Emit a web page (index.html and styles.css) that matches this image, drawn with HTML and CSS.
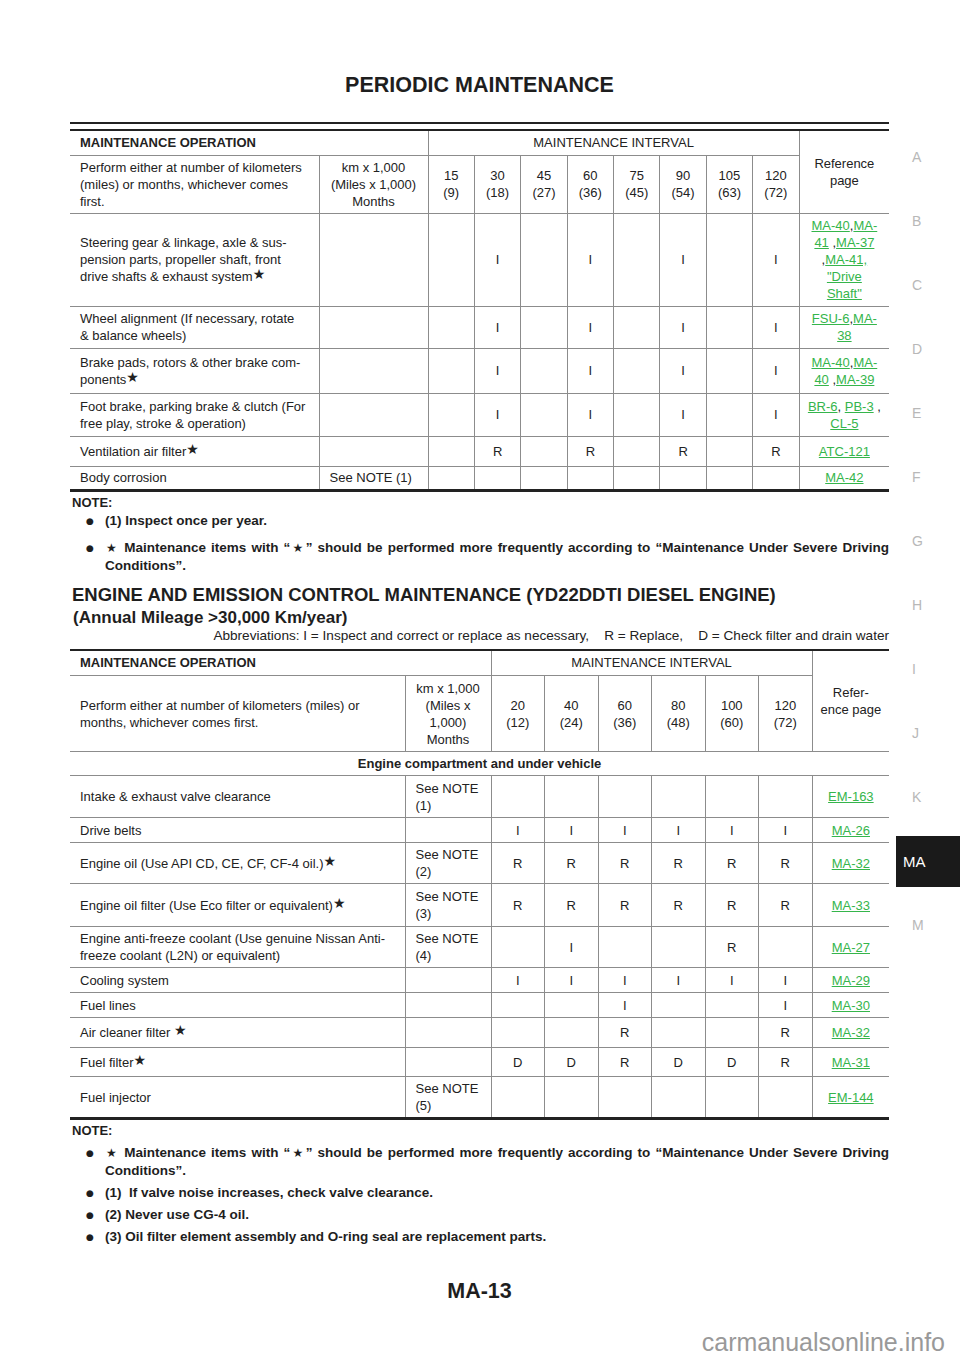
FILE: index.html
```html
<!DOCTYPE html>
<html>
<head>
<meta charset="utf-8">
<title>MA-13 Periodic Maintenance</title>
<link rel="stylesheet" href="styles.css">
</head>
<body>
<div class="page">
  <main class="main">
    <h1 class="title">PERIODIC MAINTENANCE</h1>

    <div class="t1wrap">
      <table class="grid t1">
        <colgroup>
          <col class="op1"><col class="km1">
          <col class="iv1"><col class="iv1"><col class="iv1"><col class="iv1">
          <col class="iv1"><col class="iv1"><col class="iv1"><col class="iv1">
          <col class="ref1">
        </colgroup>
        <tr class="h25">
          <td colspan="2" class="b">MAINTENANCE OPERATION</td>
          <td colspan="8" class="c">MAINTENANCE INTERVAL</td>
          <td rowspan="2" class="c">Reference<br>page</td>
        </tr>
        <tr class="h58">
          <td>Perform either at number of kilometers (miles) or months, whichever comes first.</td>
          <td class="c">km x 1,000<br>(Miles x 1,000)<br>Months</td>
          <td class="c">15<br>(9)</td><td class="c">30<br>(18)</td><td class="c">45<br>(27)</td><td class="c">60<br>(36)</td>
          <td class="c">75<br>(45)</td><td class="c">90<br>(54)</td><td class="c">105<br>(63)</td><td class="c">120<br>(72)</td>
        </tr>
        <tr class="h93">
          <td>Steering gear &amp; linkage, axle &amp; sus-<br>pension parts, propeller shaft, front<br>drive shafts &amp; exhaust system<span class="star">★</span></td>
          <td></td>
          <td class="c"></td><td class="c">I</td><td class="c"></td><td class="c">I</td>
          <td class="c"></td><td class="c">I</td><td class="c"></td><td class="c">I</td>
          <td class="c ref"><a>MA-40</a>,<a>MA-</a><br><a>41</a> ,<a>MA-37</a><br>,<a>MA-41, </a><br><a>"Drive </a><br><a>Shaft"</a></td>
        </tr>
        <tr class="h42">
          <td>Wheel alignment (If necessary, rotate<br>&amp; balance wheels)</td>
          <td></td>
          <td class="c"></td><td class="c">I</td><td class="c"></td><td class="c">I</td>
          <td class="c"></td><td class="c">I</td><td class="c"></td><td class="c">I</td>
          <td class="c ref"><a>FSU-6</a>,<a>MA-</a><br><a>38</a></td>
        </tr>
        <tr class="h45">
          <td>Brake pads, rotors &amp; other brake com-<br>ponents<span class="star">★</span></td>
          <td></td>
          <td class="c"></td><td class="c">I</td><td class="c"></td><td class="c">I</td>
          <td class="c"></td><td class="c">I</td><td class="c"></td><td class="c">I</td>
          <td class="c ref"><a>MA-40</a>,<a>MA-</a><br><a>40</a> ,<a>MA-39</a></td>
        </tr>
        <tr class="h43">
          <td>Foot brake, parking brake &amp; clutch (For<br>free play, stroke &amp; operation)</td>
          <td></td>
          <td class="c"></td><td class="c">I</td><td class="c"></td><td class="c">I</td>
          <td class="c"></td><td class="c">I</td><td class="c"></td><td class="c">I</td>
          <td class="c ref"><a>BR-6</a>, <a>PB-3</a> ,<br><a>CL-5</a></td>
        </tr>
        <tr class="h30">
          <td>Ventilation air filter<span class="star">★</span></td>
          <td></td>
          <td class="c"></td><td class="c">R</td><td class="c"></td><td class="c">R</td>
          <td class="c"></td><td class="c">R</td><td class="c"></td><td class="c">R</td>
          <td class="c ref"><a>ATC-121</a></td>
        </tr>
        <tr class="h24">
          <td>Body corrosion</td>
          <td>See NOTE (1)</td>
          <td class="c"></td><td class="c"></td><td class="c"></td><td class="c"></td>
          <td class="c"></td><td class="c"></td><td class="c"></td><td class="c"></td>
          <td class="c ref"><a>MA-42</a></td>
        </tr>
      </table>
    </div>

    <div class="notes n1">
      <div class="note-label">NOTE:</div>
      <ul class="bullets">
        <li>(1) Inspect once per year.</li>
        <li><span class="nstar">★</span> Maintenance items with “<span class="nstar">★</span>” should be performed more frequently according to “Maintenance Under Severe Driving Conditions”.</li>
      </ul>
    </div>

    <h2 class="section">ENGINE AND EMISSION CONTROL MAINTENANCE (YD22DDTI DIESEL ENGINE)</h2>
    <h3 class="subsection">(Annual Mileage &gt;30,000 Km/year)</h3>
    <p class="abbr">Abbreviations: I = Inspect and correct or replace as necessary,&nbsp;&nbsp;&nbsp; R = Replace,&nbsp;&nbsp;&nbsp; D = Check filter and drain water</p>

    <table class="grid t2">
      <colgroup>
        <col class="op2"><col class="km2">
        <col class="iv2"><col class="iv2"><col class="iv2">
        <col class="iv2"><col class="iv2"><col class="iv2">
        <col class="ref2">
      </colgroup>
      <tr class="h26">
        <td colspan="2" class="b">MAINTENANCE OPERATION</td>
        <td colspan="6" class="c">MAINTENANCE INTERVAL</td>
        <td rowspan="2" class="c">Refer-<br>ence page</td>
      </tr>
      <tr class="h76">
        <td>Perform either at number of kilometers (miles) or<br>months, whichever comes first.</td>
        <td class="c">km x 1,000<br>(Miles x<br>1,000)<br>Months</td>
        <td class="c">20<br>(12)</td><td class="c">40<br>(24)</td><td class="c">60<br>(36)</td>
        <td class="c">80<br>(48)</td><td class="c">100<br>(60)</td><td class="c">120<br>(72)</td>
      </tr>
      <tr class="h24">
        <td colspan="9" class="c b">Engine compartment and under vehicle</td>
      </tr>
      <tr class="h42">
        <td>Intake &amp; exhaust valve clearance</td>
        <td>See NOTE<br>(1)</td>
        <td class="c"></td><td class="c"></td><td class="c"></td>
        <td class="c"></td><td class="c"></td><td class="c"></td>
        <td class="c ref"><a>EM-163</a></td>
      </tr>
      <tr class="h25">
        <td>Drive belts</td>
        <td></td>
        <td class="c">I</td><td class="c">I</td><td class="c">I</td>
        <td class="c">I</td><td class="c">I</td><td class="c">I</td>
        <td class="c ref"><a>MA-26</a></td>
      </tr>
      <tr class="h41">
        <td>Engine oil (Use API CD, CE, CF, CF-4 oil.)<span class="star">★</span></td>
        <td>See NOTE<br>(2)</td>
        <td class="c">R</td><td class="c">R</td><td class="c">R</td>
        <td class="c">R</td><td class="c">R</td><td class="c">R</td>
        <td class="c ref"><a>MA-32</a></td>
      </tr>
      <tr class="h43">
        <td>Engine oil filter (Use Eco filter or equivalent)<span class="star">★</span></td>
        <td>See NOTE<br>(3)</td>
        <td class="c">R</td><td class="c">R</td><td class="c">R</td>
        <td class="c">R</td><td class="c">R</td><td class="c">R</td>
        <td class="c ref"><a>MA-33</a></td>
      </tr>
      <tr class="h41">
        <td>Engine anti-freeze coolant (Use genuine Nissan Anti-<br>freeze coolant (L2N) or equivalent)</td>
        <td>See NOTE<br>(4)</td>
        <td class="c"></td><td class="c">I</td><td class="c"></td>
        <td class="c"></td><td class="c">R</td><td class="c"></td>
        <td class="c ref"><a>MA-27</a></td>
      </tr>
      <tr class="h25">
        <td>Cooling system</td>
        <td></td>
        <td class="c">I</td><td class="c">I</td><td class="c">I</td>
        <td class="c">I</td><td class="c">I</td><td class="c">I</td>
        <td class="c ref"><a>MA-29</a></td>
      </tr>
      <tr class="h25">
        <td>Fuel lines</td>
        <td></td>
        <td class="c"></td><td class="c"></td><td class="c">I</td>
        <td class="c"></td><td class="c"></td><td class="c">I</td>
        <td class="c ref"><a>MA-30</a></td>
      </tr>
      <tr class="h30">
        <td>Air cleaner filter <span class="star">★</span></td>
        <td></td>
        <td class="c"></td><td class="c"></td><td class="c">R</td>
        <td class="c"></td><td class="c"></td><td class="c">R</td>
        <td class="c ref"><a>MA-32</a></td>
      </tr>
      <tr class="h29">
        <td>Fuel filter<span class="star">★</span></td>
        <td></td>
        <td class="c">D</td><td class="c">D</td><td class="c">R</td>
        <td class="c">D</td><td class="c">D</td><td class="c">R</td>
        <td class="c ref"><a>MA-31</a></td>
      </tr>
      <tr class="h42">
        <td>Fuel injector</td>
        <td>See NOTE<br>(5)</td>
        <td class="c"></td><td class="c"></td><td class="c"></td>
        <td class="c"></td><td class="c"></td><td class="c"></td>
        <td class="c ref"><a>EM-144</a></td>
      </tr>
    </table>

    <div class="notes n2">
      <div class="note-label">NOTE:</div>
      <ul class="bullets">
        <li><span class="nstar">★</span> Maintenance items with “<span class="nstar">★</span>” should be performed more frequently according to “Maintenance Under Severe Driving Conditions”.</li>
        <li>(1)&nbsp; If valve noise increases, check valve clearance.</li>
        <li>(2) Never use CG-4 oil.</li>
        <li>(3) Oil filter element assembly and O-ring seal are replacement parts.</li>
      </ul>
    </div>

    <div class="pageno">MA-13</div>
  </main>

  <aside class="side">
    <div class="tab">A</div>
    <div class="tab">B</div>
    <div class="tab">C</div>
    <div class="tab">D</div>
    <div class="tab">E</div>
    <div class="tab">F</div>
    <div class="tab">G</div>
    <div class="tab">H</div>
    <div class="tab">I</div>
    <div class="tab">J</div>
    <div class="tab">K</div>
    <div class="tab active"><span class="tabbox">MA</span></div>
    <div class="tab">M</div>
  </aside>
</div>
<div class="watermark">carmanualsonline.info</div>
</body>
</html>
```

FILE: styles.css
```css
html, body {
  margin: 0;
  padding: 0;
  background: #ffffff;
}
body {
  color: #222222;
  font-family: "Liberation Sans", Arial, sans-serif;
  width: 960px;
  height: 1358px;
  overflow: hidden;
  position: relative;
}
.page {
  display: flex;
  align-items: flex-start;
}
.main {
  width: 819px;
  margin-left: 70px;
  flex: none;
}
.title {
  margin: 73px 0 0;
  font-size: 21.5px;
  line-height: 24px;
  font-weight: bold;
  text-align: center;
  color: #1e1e1e;
}

/* tables */
.t1wrap {
  margin-top: 25px;
  border-top: 2px solid #222;
  padding-top: 5px;
}
table.grid {
  width: 819px;
  border-collapse: collapse;
  table-layout: fixed;
  font-size: 13px;
  line-height: 17px;
  color: #222;
}
.grid td {
  border: 1px solid #8c8c8c;
  padding: 0 10px;
  vertical-align: middle;
  text-align: left;
}
.grid tr > td:first-child { border-left: none; }
.grid tr > td:last-child { border-right: none; }
.grid td.c { text-align: center; padding: 0; }
.grid td.b { font-weight: bold; }
.t1 { border-top: 2px solid #222; border-bottom: 3px solid #222; }
.t2 { border-top: 2px solid #222; border-bottom: 3px solid #222; }

col.op1 { width: 249px; }
col.km1 { width: 109px; }
col.iv1 { width: 46.375px; }
col.ref1 { width: 90px; }
col.op2 { width: 335px; }
col.km2 { width: 86px; }
col.iv2 { width: 53.5px; }
col.ref2 { width: 77px; }

.h24 { height: 24px; }
.h25 { height: 25px; }
.h26 { height: 26px; }
.h29 { height: 29px; }
.h30 { height: 30px; }
.h41 { height: 41px; }
.h42 { height: 42px; }
.h43 { height: 43px; }
.h45 { height: 45px; }
.h58 { height: 58px; }
.h76 { height: 76px; }
.h93 { height: 93px; }

.ref a {
  color: #35b54b;
  text-decoration: underline;
}
.star {
  font-family: "DejaVu Sans", sans-serif;
  font-size: 14px;
  line-height: 10px;
  position: relative;
  top: -2px;
}

/* notes */
.notes {
  font-family: "Liberation Sans", Arial, sans-serif;
  font-weight: bold;
  font-size: 13.5px;
  line-height: 18px;
  color: #1e1e1e;
}
.note-label { padding-left: 2px; font-size: 13px; }
.bullets {
  list-style: none;
  margin: 0;
  padding: 0 0 0 16px;
}
.bullets li {
  position: relative;
  padding-left: 19px;
  text-align: justify;
}
.bullets li::before {
  content: "●";
  position: absolute;
  left: 0;
  top: 0;
  font-size: 9px;
  font-family: "DejaVu Sans", sans-serif;
}
.nstar {
  font-family: "DejaVu Sans", sans-serif;
  font-size: 12px;
  line-height: 12px;
  padding: 0 1px;
}
.n1 { margin-top: 2px; }
.n1 .bullets li + li { margin-top: 9px; }
.n2 { margin-top: 2px; }
.n2 .bullets li { margin-top: 4px; }

.section {
  margin: 9px 0 0 2px;
  font-size: 18.5px;
  line-height: 22px;
  font-weight: bold;
  color: #1e1e1e;
}
.subsection {
  margin: 2px 0 0 3px;
  font-size: 17px;
  line-height: 20px;
  font-weight: bold;
  color: #1e1e1e;
}
.abbr {
  margin: 0 0 5px;
  font-size: 13.6px;
  line-height: 16px;
  text-align: right;
  color: #222;
}

.pageno {
  margin-top: 33px;
  text-align: center;
  font-size: 21.5px;
  line-height: 24px;
  font-weight: bold;
  color: #1e1e1e;
}

/* side index */
.side {
  width: 64px;
  margin-left: 7px;
  padding-top: 125px;
  flex: none;
}
.tab {
  height: 64px;
  display: flex;
  align-items: center;
  padding-left: 16px;
  font-size: 14px;
  color: #b8b8b8;
}
.tab.active { padding-left: 0; }
.tabbox {
  display: flex;
  align-items: center;
  width: 57px;
  height: 51px;
  padding-left: 7px;
  background: #1a1a1a;
  color: #ffffff;
  font-size: 15px;
}

.watermark {
  position: absolute;
  right: 15px;
  top: 1327px;
  font-size: 25px;
  line-height: 30px;
  color: #999999;
}
```
